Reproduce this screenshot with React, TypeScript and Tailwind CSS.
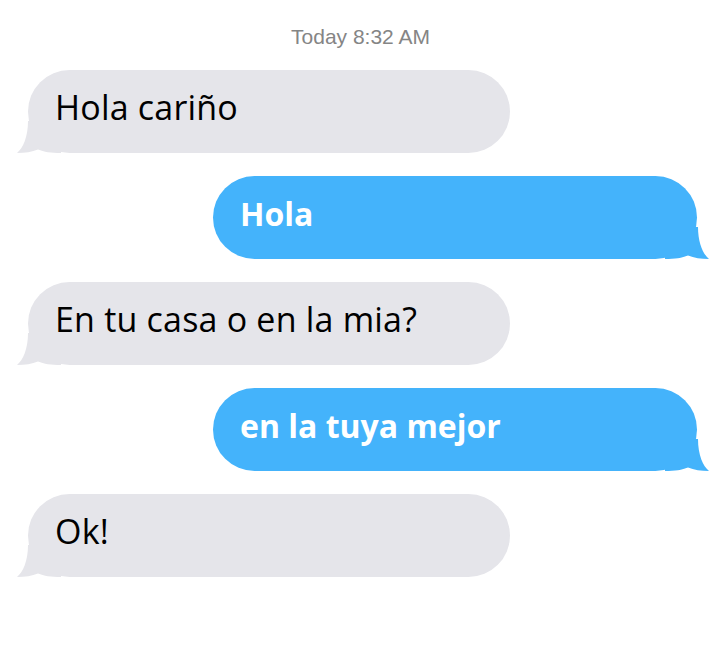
import React from "react";

type Msg = { text: string; mine: boolean };

const messages: Msg[] = [
  { text: "Hola cariño", mine: false },
  { text: "Hola", mine: true },
  { text: "En tu casa o en la mia?", mine: false },
  { text: "en la tuya mejor", mine: true },
  { text: "Ok!", mine: false },
];

function Tail({ mine }: { mine: boolean }) {
  // small curled tail at the bottom corner of the bubble
  if (mine) {
    return (
      <svg
        className="absolute bottom-0 right-[-12px]"
        width="44"
        height="32"
        viewBox="0 0 44 32"
      >
        <path
          d="M33 0 C33 16 38 27 44 32 C36 32 29 31 23 28.5 C17 31 10 32 0 32 L0 0 Z"
          fill="#44b3fb"
        />
      </svg>
    );
  }
  return (
    <svg
      className="absolute bottom-0 left-[-11px]"
      width="44"
      height="32"
      viewBox="0 0 44 32"
    >
      <path
        d="M11 0 C11 16 6 27 0 32 C8 32 15 31 21 28.5 C27 31 34 32 44 32 L44 0 Z"
        fill="#e5e5ea"
      />
    </svg>
  );
}

function Bubble({ msg }: { msg: Msg }) {
  return (
    <div
      className={`relative h-[83px] rounded-[42px] flex items-center px-[27px] ${
        msg.mine
          ? "ml-[213px] w-[484px] bg-[#44b3fb] text-white font-bold pb-[7px]"
          : "ml-[28px] w-[482px] bg-[#e5e5ea] text-black pb-[9px]"
      }`}
    >
      <Tail mine={msg.mine} />
      <span
        className={`relative leading-none ${
          msg.mine ? "text-[32px]" : "text-[34px] tracking-[0.2px]"
        }`}
      >
        {msg.text}
      </span>
    </div>
  );
}

export default function App() {
  return (
    <div
      className="w-[728px] h-[660px] bg-white pt-[25px]"
      style={{ fontFamily: '"Open Sans", sans-serif' }}
    >
      <div className="text-center pr-[7px] text-[21px] leading-[24px] text-[#858585] font-['Liberation_Sans',Arial,sans-serif]">
        Today 8:32 AM
      </div>
      <div className="mt-[21px] flex flex-col gap-[23px]">
        {messages.map((m, i) => (
          <Bubble key={i} msg={m} />
        ))}
      </div>
    </div>
  );
}
